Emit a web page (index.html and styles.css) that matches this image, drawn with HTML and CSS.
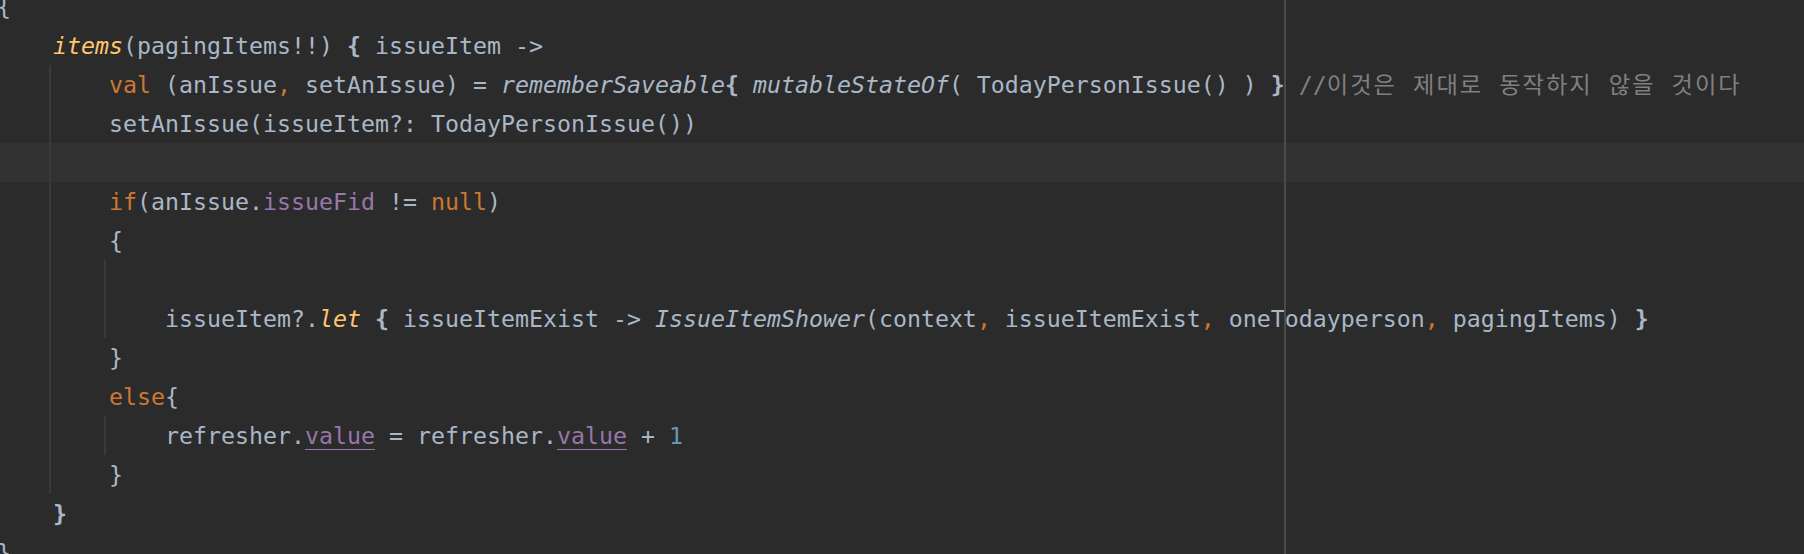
FILE: index.html
```html
<!DOCTYPE html>
<html lang="ko">
<head>
<meta charset="utf-8">
<title>Editor</title>
<link rel="stylesheet" href="styles.css">
</head>
<body>
<div class="editor">
  <div class="line">{</div>
  <div class="line">    <i class="fn-y">items</i>(pagingItems!!) <b>{</b> issueItem -&gt;</div>
  <div class="line g1">        <span class="kw">val</span> (anIssue<span class="kw">,</span> setAnIssue) = <i>rememberSaveable</i><b>{</b> <i>mutableStateOf</i>( TodayPersonIssue() ) <b>}</b> <span class="cm">//<span class="ko">이것은 제대로 동작하지 않을 것이다</span></span></div>
  <div class="line g1">        setAnIssue(issueItem?: TodayPersonIssue())</div>
  <div class="line g1 current"> </div>
  <div class="line g1">        <span class="kw">if</span>(anIssue.<span class="pr">issueFid</span> != <span class="kw">null</span>)</div>
  <div class="line g1">        {</div>
  <div class="line g1 g2"> </div>
  <div class="line g1 g2">            issueItem?.<i class="fn-y">let</i> <b>{</b> issueItemExist -&gt; <i>IssueItemShower</i>(context<span class="kw">,</span> issueItemExist<span class="kw">,</span> oneTodayperson<span class="kw">,</span> pagingItems) <b>}</b></div>
  <div class="line g1">        }</div>
  <div class="line g1">        <span class="kw">else</span>{</div>
  <div class="line g1 g2">            refresher.<span class="pr ul">value</span> = refresher.<span class="pr ul">value</span> + <span class="num">1</span></div>
  <div class="line g1">        }</div>
  <div class="line">    <b>}</b></div>
  <div class="line">}</div>
</div>
</body>
</html>
```

FILE: styles.css
```css
html, body {
  margin: 0;
  padding: 0;
  background: #2b2b2b;
  overflow: hidden;
}

body {
  width: 1804px;
  height: 554px;
}

.editor {
  position: relative;
  margin-top: -13px;
  margin-left: -3px;
  font-family: "DejaVu Sans Mono", "Noto Sans CJK KR", monospace;
  font-size: 23.25px;
  color: #a9b7c6;
}

.editor::after {
  content: "";
  position: absolute;
  top: 0;
  bottom: -100px;
  left: 1287px;
  width: 2px;
  background: #4b4b4b;
}

.line {
  height: 39px;
  line-height: 39px;
  white-space: pre;
  background-repeat: no-repeat;
}

.line.current {
  background-color: #323232;
}

.line.g1 {
  background-image: linear-gradient(#3a3a3a, #3a3a3a);
  background-size: 2px 100%;
  background-position: 52px 0;
}

.line.g1.g2 {
  background-image: linear-gradient(#3a3a3a, #3a3a3a), linear-gradient(#3a3a3a, #3a3a3a);
  background-size: 2px 100%, 2px 100%;
  background-position: 52px 0, 107px 0;
}

i {
  font-style: italic;
}

.fn-y {
  color: #ffc66d;
}

b {
  font-weight: bold;
}

.kw {
  color: #cc7832;
}

.pr {
  color: #9876aa;
}

.ul {
  text-decoration: underline;
  text-decoration-thickness: 1px;
  text-underline-offset: 5px;
}

.num {
  color: #6897bb;
}

.cm {
  color: #808080;
}

.ko {
  letter-spacing: 2px;
}
```
